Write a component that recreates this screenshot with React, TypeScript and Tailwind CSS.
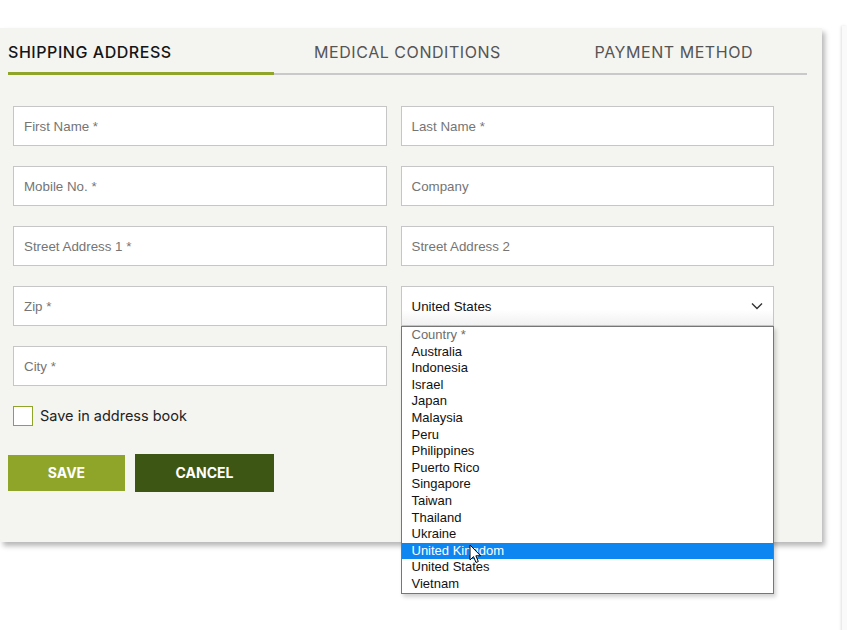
import { useState } from 'react'

const tabs = ['SHIPPING ADDRESS', 'MEDICAL CONDITIONS', 'PAYMENT METHOD']

const countries = [
  'Australia',
  'Indonesia',
  'Israel',
  'Japan',
  'Malaysia',
  'Peru',
  'Philippines',
  'Puerto Rico',
  'Singapore',
  'Taiwan',
  'Thailand',
  'Ukraine',
  'United Kingdom',
  'United States',
  'Vietnam',
]

const sans = "font-['Inter','Noto_Sans',sans-serif]"
const arial = "font-['Liberation_Sans',Arial,sans-serif]"

function Field({ placeholder }: { placeholder: string }) {
  return (
    <input
      type="text"
      placeholder={placeholder}
      className={`h-[40px] w-full border border-[#c6c6c6] bg-white px-[10px] text-[13.33px] text-[#222] outline-none placeholder:text-[#757575] ${arial}`}
    />
  )
}

function CountrySelect() {
  const [hovered] = useState('United Kingdom')

  return (
    <div className="relative">
      <div className={`flex h-[40px] items-center justify-between border border-[#c6c6c6] bg-linear-to-b from-white from-60% to-[#f1f1f1] pl-[10px] pr-[10px] text-[13.33px] text-[#111] ${arial}`}>
        <span className="pt-px">United States</span>
        <svg width="12" height="8" viewBox="0 0 12 8" className="text-[#333]">
          <polyline points="1,1.5 6,6.5 11,1.5" fill="none" stroke="currentColor" strokeWidth="1.4" />
        </svg>
      </div>

      <ul className={`absolute left-0 right-0 top-full z-10 border border-[#767676] bg-white text-[13px] shadow-[2px_3px_4px_rgba(0,0,0,0.18)] ${arial}`}>
        <li className="h-[16.6px] px-[10px] leading-[16.6px] text-[#6d6d6d]">Country *</li>
        {countries.map((country) => (
          <li
            key={country}
            className={`h-[16.6px] px-[10px] leading-[16.6px] ${country === hovered ? 'bg-[#0e86f2] text-white' : 'text-[#111]'}`}
          >
            {country}
          </li>
        ))}
        {/* mouse pointer from the screenshot */}
        <svg width="13" height="20" viewBox="0 0 13 20" className="absolute left-[67px] top-[217px]">
          <path d="M1 1 L1 16 L4.5 12.6 L7 18.5 L9.3 17.5 L6.9 11.8 L11.6 11.8 Z" fill="white" stroke="black" strokeWidth="1" strokeLinejoin="round" />
        </svg>
      </ul>
    </div>
  )
}

export default function App() {
  const [activeTab, setActiveTab] = useState(0)
  const [saveToBook, setSaveToBook] = useState(false)

  return (
    <div className="flex h-[630px] w-[847px] items-start overflow-hidden bg-white">
      <div className="mt-[28px] h-[514px] w-[822px] shrink-0 bg-[#f4f4f0] pl-[8px] pt-[12px] shadow-[3px_4px_5px_rgba(0,0,0,0.28)]">
        <div className="flex w-[799px] border-b-2 border-[#c9c9c9]">
          {tabs.map((tab, index) => (
            <button
              key={tab}
              type="button"
              onClick={() => setActiveTab(index)}
              className={`relative h-[33px] flex-1 pb-[10px] text-[16px] leading-[18px] tracking-[0.55px] ${sans} ${index === 0 ? 'text-left' : 'text-center'} ${
                index === activeTab ? 'font-medium text-[#151515]' : 'font-normal text-[#555]'
              }`}
            >
              {tab}
              {index === activeTab && <span className="absolute -bottom-[2px] left-0 right-0 h-[3px] bg-[#8fa52a]" />}
            </button>
          ))}
        </div>

        <form className="ml-[5px] mt-[31px] w-[761px]">
          <div className="grid grid-cols-2 gap-x-[14px] gap-y-[20px]">
            <Field placeholder="First Name *" />
            <Field placeholder="Last Name *" />
            <Field placeholder="Mobile No. *" />
            <Field placeholder="Company" />
            <Field placeholder="Street Address 1 *" />
            <Field placeholder="Street Address 2" />
            <Field placeholder="Zip *" />
            <CountrySelect />
            <Field placeholder="City *" />
          </div>

          <label className="mt-[19px] flex w-fit cursor-pointer items-center gap-[7px]">
            <span
              onClick={() => setSaveToBook((current) => !current)}
              className="flex h-[20px] w-[20px] items-center justify-center border border-[#8fa52a] bg-white"
            >
              {saveToBook && <span className="h-[10px] w-[10px] bg-[#8fa52a]" />}
            </span>
            <span className={`text-[14.5px] text-[#222] ${sans}`}>Save in address book</span>
          </label>
        </form>

        <div className="mt-[27px] flex items-center gap-[10px]">
          <button type="button" className={`h-[36px] w-[117px] bg-[#8fa52a] text-[14px] font-bold text-white ${sans}`}>
            SAVE
          </button>
          <button type="button" className={`h-[38px] w-[139px] bg-[#3d5614] text-[14px] font-bold text-white ${sans}`}>
            CANCEL
          </button>
        </div>
      </div>

      <div className="ml-[20px] mt-[26px] h-[620px] flex-1 bg-[#fafafa] shadow-[-1px_0_3px_rgba(0,0,0,0.12)]" />
    </div>
  )
}
